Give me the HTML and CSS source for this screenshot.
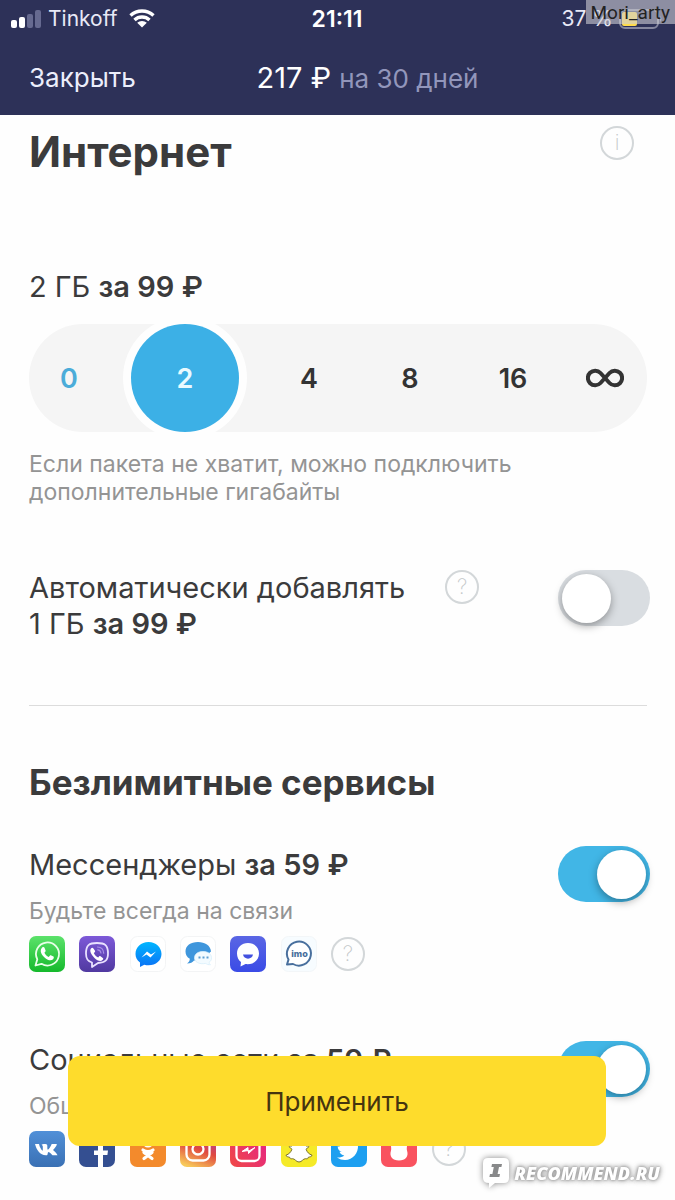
FILE: index.html
```html
<!DOCTYPE html>
<html lang="ru">

<head>
    <meta charset="UTF-8">
    <meta name="viewport" content="width=device-width, initial-scale=1.0">
    <link rel="stylesheet" href="styles.css">
    <title>Тариф</title>
</head>

<body>
    <header class="header">
        <div class="status">
            <div class="status-left">
                <svg class="signal" viewBox="0 0 30 18" width="30" height="18">
                    <rect x="0" y="10" width="6" height="8" rx="2" fill="#fff" />
                    <rect x="8" y="7" width="6" height="11" rx="2" fill="#fff" />
                    <rect x="16" y="4" width="6" height="14" rx="2" fill="#666a90" />
                    <rect x="24" y="0" width="6" height="18" rx="2" fill="#666a90" />
                </svg>
                <span>Tinkoff</span>
                <svg class="wifi" viewBox="0 0 26 19" width="26" height="19">
                    <path d="M1.5 6.5a17 17 0 0 1 23 0M5.500 11a11 11 0 0 1 15 0" fill="none" stroke="#fff" stroke-width="3.400" />
                    <path d="M8.200 13.800a7 7 0 0 1 9.600 0L13 18.600z" fill="#fff" />
                </svg>
            </div>
            <time class="clock">21:11</time>
            <div class="status-right">
                <span>37 %</span>
                <svg viewBox="0 0 44 20" width="44" height="20">
                    <rect x="1" y="1" width="38" height="18" rx="5" fill="none" stroke="#85879f" stroke-width="2" />
                    <rect x="3" y="3" width="15" height="14" rx="2" fill="#ffdc4c" />
                    <path d="M41 7q3 3 0 6z" fill="#85879f" />
                </svg>
            </div>
        </div>
        <nav class="nav">
            <a class="close" href="#">Закрыть</a>
            <p class="total">217 ₽ <span>на 30 дней</span></p>
        </nav>
    </header>

    <main class="content">
        <section>
            <div class="title-row">
                <h1>Интернет</h1>
                <button class="help" type="button" aria-label="Информация">i</button>
            </div>
            <p class="plan">2 ГБ <b>за 99 ₽</b></p>
            <div class="sizes">
                <label class="zero"><input type="radio" name="size"><span>0</span></label>
                <label><input type="radio" name="size" checked><span>2</span></label>
                <label><input type="radio" name="size"><span>4</span></label>
                <label><input type="radio" name="size"><span>8</span></label>
                <label><input type="radio" name="size"><span>16</span></label>
                <label><input type="radio" name="size" aria-label="Безлимит">
                    <svg viewBox="0 0 38 20" width="38" height="20">
                        <path d="M19 10L14.500 5A7.300 7.300 0 1 0 14.500 15L23.500 5A7.300 7.300 0 1 1 23.500 15z" fill="none" stroke="currentColor" stroke-width="4" stroke-linejoin="round" />
                    </svg>
                </label>
            </div>
            <p class="hint">Если пакета не хватит, можно подключить дополнительные гигабайты</p>
            <div class="row auto">
                <label class="auto-text" for="auto">Автоматически добавлять<br>1 ГБ <b>за 99 ₽</b></label>
                <button class="help" type="button" aria-label="Помощь">?</button>
                <input class="toggle" type="checkbox" id="auto">
            </div>
        </section>

        <section class="services">
            <h2>Безлимитные сервисы</h2>
            <div class="service">
                <div class="row">
                    <div>
                        <label class="name" for="messengers">Мессенджеры <b>за 59 ₽</b></label>
                        <p class="note">Будьте всегда на связи</p>
                    </div>
                    <input class="toggle" type="checkbox" id="messengers" checked>
                </div>
                <div class="icons">
                    <!-- WhatsApp -->
                    <svg viewBox="0 0 36 36">
                        <defs>
                            <linearGradient id="wa" x2="0" y2="1"><stop stop-color="#5ce26b" /><stop offset="1" stop-color="#15b92c" /></linearGradient>
                            <linearGradient id="vb" x2="0" y2="1"><stop stop-color="#7d59d8" /><stop offset="1" stop-color="#5039a0" /></linearGradient>
                            <linearGradient id="ms" x2="0" y2="1"><stop stop-color="#00b6ff" /><stop offset="1" stop-color="#0b72f5" /></linearGradient>
                            <linearGradient id="tt" x2="0" y2="1"><stop stop-color="#5a66e4" /><stop offset="1" stop-color="#3a4be6" /></linearGradient>
                        </defs>
                        <rect width="36" height="36" rx="7" fill="url(#wa)" />
                        <path d="M6.500 29.500l1.800-6.200A11.500 11.500 0 1 1 12.500 27.800z" fill="none" stroke="#e9ffe9" stroke-width="1.800" stroke-linejoin="round" />
                        <path d="M13.200 11.500c.9-.8 1.900-.6 2.300.3l1.100 2.600c.2.700-.2 1.200-1.200 2.300.9 2 2.300 3.300 4.400 4.200 1-1.200 1.400-1.900 2-1.600l2.700 1.300c.6.400.3 1.900-.4 2.600-2 1.900-5 1.200-8-1.200-3.600-2.900-6-7.400-2.900-10.500z" fill="#fff" />
                    </svg>
                    <!-- Viber -->
                    <svg viewBox="0 0 36 36">
                        <rect width="36" height="36" rx="7" fill="url(#vb)" />
                        <path d="M18 7c8 0 11 2 11 10.500 0 7-3 9-10 9.500l-6 4v-4.500C9 25.500 7 23.500 7 17.500 7 9 10 7 18 7z" fill="none" stroke="#e9e1ff" stroke-width="1.800" stroke-linejoin="round" />
                        <path d="M12 12.500c1-1 1.800-.8 2.400 0l1.600 2.300c.4 1-.2 1.500-1.200 2.300 1 2.300 2.300 3.600 4.500 4.300.8-1.100 1.300-1.600 2.200-1.100l2.300 1.600c.8.700.5 1.400-.3 2.200-2 2-5.500.2-8-2.200-3-3-5.500-7-3.500-9.400z" fill="#fff" />
                        <path d="M18.500 11c4 .2 6 2.400 6.200 6.200M18.700 13.800c2 .2 3 1.200 3.200 3.200" fill="none" stroke="#a78fe6" stroke-width="1.200" stroke-linecap="round" />
                    </svg>
                    <!-- Messenger -->
                    <svg viewBox="0 0 36 36">
                        <rect x=".5" y=".5" width="35" height="35" rx="7" fill="#fff" stroke="#f3f4f5" />
                        <path d="M18.500 6C11 6 5.500 11.200 5.500 18c0 3.500 1.600 6.500 4.500 8.600V31l4.300-2.300c1.300.4 2.700.6 4.200.6 7.500 0 13-4.800 13-11.300S26 6 18.500 6z" fill="url(#ms)" />
                        <path d="M11.500 21.500l5.500-6 4 3 5-3-5.500 6-4-3z" fill="#fff" />
                    </svg>
                    <!-- Chat -->
                    <svg viewBox="0 0 36 36">
                        <rect x=".5" y=".5" width="35" height="35" rx="7" fill="#fff" stroke="#f3f4f5" />
                        <path d="M18 6C10.500 6 5.500 9.800 5.500 15.500c0 3.200 1.500 5.600 4.300 7.300 0 2-1 3.600-2.800 4.700 3.500 0 5.500-1.200 7-3H20l11-9C30.500 9.500 25 6 18 6z" fill="#3f96dc" />
                        <path d="M23 15.500c5 0 8.500 2.600 8.500 6.300 0 2-.8 3.500-2.500 4.600 0 1 .6 1.600 1.500 2.300-2 .2-3.600-.4-4.700-1.300-7 1.200-11.300-1.400-11.300-5.600 0-3.700 3.500-6.300 8.500-6.300z" fill="#f3fbff" stroke="#d8effb" stroke-width=".8" />
                        <path d="M18.500 20.500h2v2h-2zM22.500 20.500h2v2h-2zM26.500 20.500h2v2h-2z" fill="#5f9fd2" />
                    </svg>
                    <!-- TamTam -->
                    <svg viewBox="0 0 36 36">
                        <rect width="36" height="36" rx="7" fill="url(#tt)" />
                        <path d="M18 7C11.500 7 7 11.600 7 17.500c0 3.700 1.500 6.600 4 8.500l-.5 4.500 5-2.400c8 1 13.500-4 13.500-10.600C29 11.600 24.500 7 18 7z" fill="#fff" />
                        <path d="M13 18.500h10c-.5 5.500-9.500 5.500-10 0z" fill="#4351df" />
                    </svg>
                    <!-- imo -->
                    <svg viewBox="0 0 36 36">
                        <rect x=".5" y=".5" width="35" height="35" rx="7" fill="#f7fcff" stroke="#f3f6f8" />
                        <path d="M6 28.500l1.500-5A12 12 0 1 1 12 28z" fill="#fff" stroke="#486f9d" stroke-width="2" stroke-linejoin="round" />
                        <text x="18.500" y="21" text-anchor="middle" class="imo">imo</text>
                    </svg>
                    <button class="help" type="button" aria-label="Помощь">?</button>
                </div>
            </div>

            <div class="service">
                <div class="row">
                    <div>
                        <label class="name" for="social">Социальные сети <b>за 59 ₽</b></label>
                        <p class="note">Общайтесь</p>
                    </div>
                    <input class="toggle" type="checkbox" id="social" checked>
                </div>
                <div class="icons">
                    <!-- VK -->
                    <svg viewBox="0 0 36 36">
                        <defs>
                            <linearGradient id="vk" x2="0" y2="1"><stop stop-color="#5190d8" /><stop offset="1" stop-color="#3a70b4" /></linearGradient>
                            <linearGradient id="ig" x1=".7" y1="0" x2=".3" y2="1"><stop stop-color="#a33bb0" /><stop offset=".5" stop-color="#e0493f" /><stop offset="1" stop-color="#f8c95a" /></linearGradient>
                            <linearGradient id="tv" x1="0" y1="1" x2="1" y2=".3"><stop stop-color="#f04a45" /><stop offset="1" stop-color="#e52682" /></linearGradient>
                        </defs>
                        <rect width="36" height="36" rx="7" fill="url(#vk)" />
                        <path d="M6 13h4c.8 3.400 2.300 6 3.800 6.800V15.500c0-1-.6-1.500-1.300-1.800.9-.9 5.200-1.200 5.700.2.300 1.100-.1 4.400.6 4.800 1.300-.5 3-3.200 3.900-5.700h4.800c1.400.5-2.300 4.800-3.500 6 1.200 1.400 3.800 3 4.500 5.200h-5c-1.300-1.200-2.500-3-4-3.200-1.200.2-.4 2.700-1.500 3.200C11.500 25 7.500 19 6 13z" fill="#fff" />
                    </svg>
                    <!-- Facebook -->
                    <svg viewBox="0 0 36 36">
                        <rect width="36" height="36" rx="7" fill="#344f91" />
                        <path d="M19 36V24h-4v-4.500h4V15c0-4.500 2.500-7 6.500-7H29v4.500h-2.500c-1.800 0-2.500.8-2.500 2.500v4.500h5l-.6 4.500H24v12z" fill="#fff" />
                    </svg>
                    <!-- Одноклассники -->
                    <svg viewBox="0 0 36 36">
                        <rect width="36" height="36" rx="7" fill="#f38a2c" />
                        <circle cx="18" cy="11" r="4" fill="none" stroke="#fff" stroke-width="3" />
                        <path d="M13 19q5 3.500 10 0M14 27.500l8-6M14 21.500l8 6" fill="none" stroke="#fff" stroke-width="3.200" stroke-linecap="round" />
                    </svg>
                    <!-- Instagram -->
                    <svg viewBox="0 0 36 36">
                        <rect width="36" height="36" rx="7" fill="url(#ig)" />
                        <rect x="6.500" y="6.500" width="23" height="23" rx="6" fill="none" stroke="#fff" stroke-width="2.300" />
                        <circle cx="18" cy="18" r="5.500" fill="none" stroke="#fff" stroke-width="2.300" />
                        <circle cx="25" cy="11" r="1.500" fill="#fff" />
                    </svg>
                    <!-- IGTV -->
                    <svg viewBox="0 0 36 36">
                        <rect width="36" height="36" rx="7" fill="url(#tv)" />
                        <rect x="6.500" y="9" width="23" height="21" rx="5" fill="none" stroke="#fff" stroke-width="2.300" />
                        <path d="M13 4l5 5 5-5" fill="none" stroke="#fff" stroke-width="2" />
                        <path d="M12 20.500l6-4v4l7-4-6.500 6v-3z" fill="#fff" stroke="#fff" />
                    </svg>
                    <!-- Snapchat -->
                    <svg viewBox="0 0 36 36">
                        <rect width="36" height="36" rx="7" fill="#f5ea28" />
                        <path d="M18 5c-5 0-7.500 3.500-7 10-1 .3-2.500-.4-2.800.8 0 1.200 2.800 1.200 2.600 2.700-.8 2.500-2.800 4.700-5.800 5.700 0 1.600 2.500 1.600 3.800 2.200.5 1.500.6 1.500 2.700 1.300 2.500-.1 3.500 3.300 6.500 3.300s4-3.400 6.500-3.300c2.100.2 2.200.2 2.700-1.300 1.300-.6 3.800-.6 3.800-2.200-3-1-5-3.200-5.800-5.700-.2-1.500 2.600-1.500 2.600-2.700-.3-1.200-1.800-.5-2.800-.8.5-6.500-2-10-7-10z" fill="#fff" stroke="#77702b" stroke-width="1" />
                    </svg>
                    <!-- Twitter -->
                    <svg viewBox="0 0 36 36">
                        <rect width="36" height="36" rx="7" fill="#1d9ff0" />
                        <path d="M30 11.500l-3 2.500c.5 8-5 15-13 15-3 0-5.500-.8-8-2.500 3 .2 5.300-.5 7.300-2-2.300-.2-4-1.500-4.800-3.700h2.200c-2.700-.8-4-2.800-4-5.500l2.300.7C6.500 14 6 11.500 7.500 9c3 3.500 6 5.200 10.500 5.500-.8-7 5-8.500 8.200-5l3-1.200-2 2.800z" fill="#fff" />
                    </svg>
                    <!-- Periscope -->
                    <svg viewBox="0 0 36 36">
                        <rect width="36" height="36" rx="7" fill="#f9525f" />
                        <path d="M18 6c-5 0-8 4-8 8.500 0 2 .5 3.200 0 5C8 25.500 11.500 29.500 18 29.500s10-4 8-10c-.5-1.800 0-3 0-5C26 10 23 6 18 6z" fill="#fff" />
                    </svg>
                    <button class="help" type="button" aria-label="Помощь">?</button>
                </div>
            </div>
        </section>
    </main>

    <button class="apply" type="button">Применить</button>

    <div class="author">Mori_arty</div>
    <div class="brand">
        <svg viewBox="0 0 28 32" width="28" height="32">
            <path d="M6 1h16q5 0 5 5v15q0 5-5 5H13l-6 5v-5Q1 26 1 21V6q0-5 5-5z" fill="#fff" />
            <path d="M10 7h10l-.6 3h-2.400l-1.400 7h2.400l-.6 3h-10l.6-3h2.400l1.400-7H9.400z" fill="#88898a" />
        </svg>
        <span>RECOMMEND.RU</span>
    </div>
</body>

</html>
```
FILE: styles.css
```css
* {
    margin: 0;
    padding: 0;
    box-sizing: border-box;
}

body {
    font-family: Inter, "Liberation Sans", sans-serif;
    color: #3b3b3c;
    background-color: #fefefe;
    overflow-x: hidden;
}

svg {
    display: block;
}

b {
    font-weight: 600;
}

button,
input {
    font-family: inherit;
    border: none;
    cursor: pointer;
}

.header {
    background-color: #2d3158;
    color: #fff;
}

.status {
    height: 37px;
    padding: 0 12px 0 11px;
    display: grid;
    grid-template-columns: 1fr auto 1fr;
    align-items: center;
    font-size: 21px;
}

.status-left,
.status-right {
    display: flex;
    align-items: center;
    color: #e8e9f6;
}

.status-left {
    gap: 7px;
}

.wifi {
    margin-left: 5px;
}

.status-right {
    justify-content: flex-end;
    gap: 6px;
}

.clock {
    font-size: 23px;
    font-weight: 600;
}

.nav {
    height: 78px;
    padding: 2px 29px 0;
    display: grid;
    grid-template-columns: 1fr auto 1fr;
    align-items: center;
}

.close {
    color: #eceefb;
    font-size: 26px;
    text-decoration: none;
}

.total {
    font-size: 29px;
    margin-left: 60px;
}

.total span {
    color: #9296bb;
    font-size: 26px;
}

.content {
    padding: 11px 28px 32px 29px;
}

.title-row {
    display: flex;
    justify-content: space-between;
    align-items: flex-start;
    padding-right: 13px;
}

h1 {
    font-size: 42px;
    line-height: 52px;
}

h2 {
    font-size: 35px;
    line-height: 44px;
}

.help {
    width: 34px;
    height: 34px;
    flex: none;
    border: 2px solid #d3d7d9;
    border-radius: 50%;
    background: none;
    color: #c3c7c9;
    font-size: 21px;
    font-weight: 200;
    line-height: 30px;
}

.plan {
    margin-top: 91px;
    font-size: 29px;
    line-height: 36px;
}

.sizes {
    height: 108px;
    margin-top: 19px;
    display: grid;
    grid-template-columns: 80fr 152fr 96fr 106fr 100fr 84fr;
    border-radius: 54px;
    background-color: #f5f5f5;
}

.sizes label {
    display: grid;
    place-items: center;
    font-size: 27px;
    font-weight: 600;
    color: #333;
    cursor: pointer;
}

.sizes input,
.sizes span,
.sizes svg {
    grid-area: 1 / 1;
}

.sizes input {
    appearance: none;
    width: 100%;
    height: 108px;
    border-radius: 50%;
}

.sizes input:checked {
    width: 108px;
    background-color: #3cb0e6;
    box-shadow: 0 0 0 8px #fefefe;
}

.sizes input:checked+span {
    color: #e9faff;
}

.sizes .zero {
    color: #4bacd9;
}

.hint,
.note {
    color: #949494;
    font-size: 23px;
    line-height: 28px;
}

.hint {
    margin-top: 18px;
    max-width: 520px;
}

.row {
    display: flex;
    align-items: flex-start;
    justify-content: space-between;
    margin-right: -3px;
}

.auto {
    margin-top: 64px;
}

.auto-text {
    font-size: 29px;
    line-height: 36px;
}

.auto .help {
    margin-left: 40px;
}

.auto .toggle {
    margin-left: auto;
}

.toggle {
    appearance: none;
    width: 92px;
    height: 56px;
    flex: none;
    padding: 4px;
    display: flex;
    border-radius: 28px;
    background-color: #d9dde1;
}

.toggle::before {
    content: "";
    width: 49px;
    height: 49px;
    border-radius: 50%;
    background-color: #fff;
    box-shadow: 0 3px 8px rgba(0, 0, 0, 0.35);
}

.toggle:checked {
    justify-content: flex-end;
    background-color: #41b6e6;
}

.services {
    margin-top: 63px;
    padding-top: 54px;
    border-top: 1px solid #dcdcdc;
}

.service {
    margin-top: 42px;
}

.service+.service {
    margin-top: 69px;
}

.name {
    display: block;
    font-size: 29px;
    line-height: 38px;
}

.note {
    margin-top: 13px;
}

.icons {
    max-width: 453px;
    margin-top: 11px;
    display: grid;
    grid-template-columns: repeat(9, 1fr);
    align-items: center;
}

.icons svg {
    width: 36px;
    height: 36px;
}

.imo {
    fill: #486f9d;
    font-size: 9px;
    font-weight: 800;
}

.apply {
    position: fixed;
    left: 68px;
    right: 69px;
    bottom: 54px;
    height: 90px;
    border-radius: 12px;
    background-color: #fedc2c;
    color: #45350f;
    font-size: 26px;
}

.author {
    position: absolute;
    top: 0;
    right: 0;
    height: 24px;
    padding: 0 5px;
    background-color: rgba(205, 205, 212, 0.6);
    color: #222;
    font: 19px/26px Roboto, sans-serif;
}

.brand {
    position: fixed;
    right: 15px;
    bottom: 11px;
    display: flex;
    align-items: center;
    gap: 4px;
    color: #fff;
    font: italic 800 18px/32px "Open Sans", sans-serif;
    text-shadow: 0 0 2px #999, 0 0 4px #999, 0 0 6px #999;
}

.brand svg {
    filter: drop-shadow(0 0 3px #888);
}
```
